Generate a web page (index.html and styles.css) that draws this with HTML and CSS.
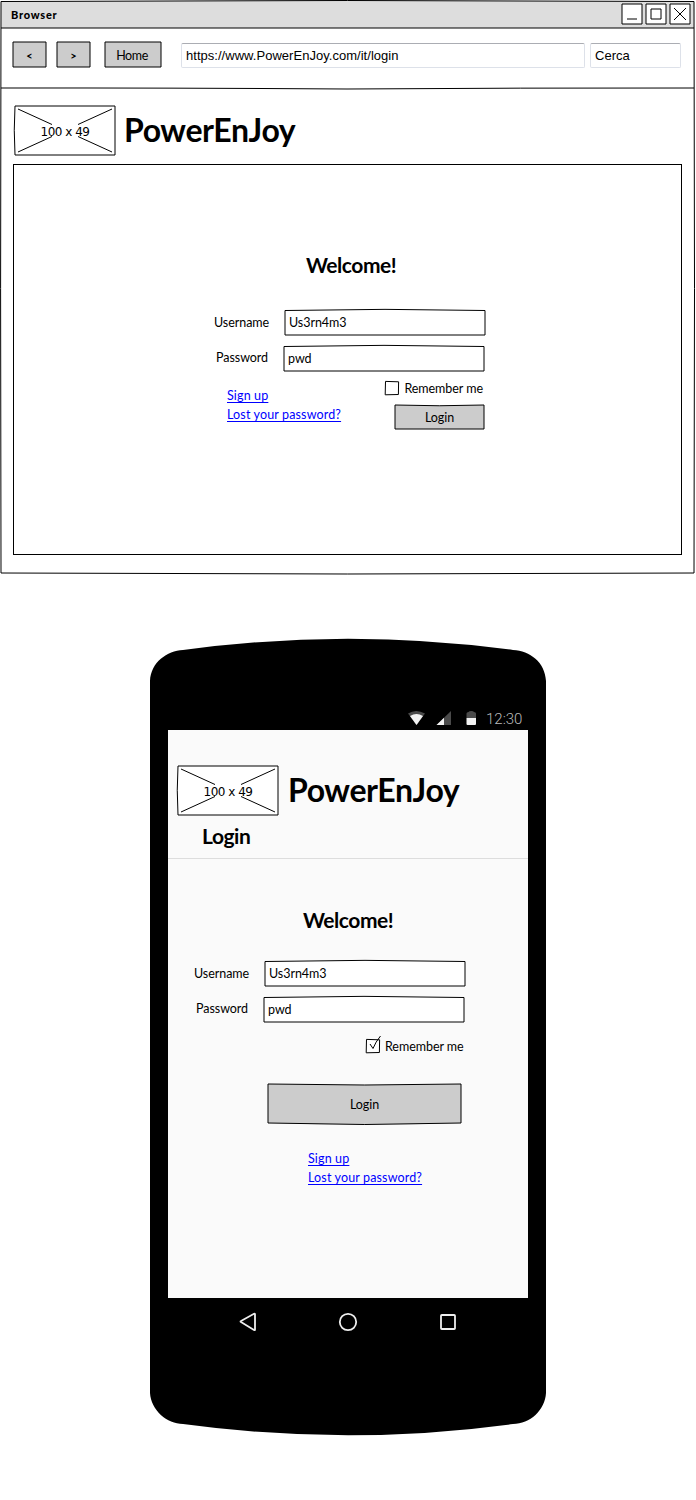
FILE: index.html
```html
<!DOCTYPE html>
<html lang="en">
<head>
<meta charset="utf-8">
<title>PowerEnJoy login</title>
<link rel="stylesheet" href="styles.css">
</head>
<body>
<section class="browser">
  <svg class="sketch" viewBox="0 0 696 576">
    <path fill="#ddd" d="M1 1H694V28H1Z"/>
    <path class="ink" d="M1 1.5Q347 -.5 694 1.5Q695 290 694 573Q347 575 1 573Q.2 290 1 1.5ZM1 28H694M1 88Q170 87.8 347 89Q520 87.8 694 88"/>
  </svg>
  <header class="titlebar">
    <span class="window-name">Browser</span>
    <div class="window-buttons">
      <svg class="window-button" viewBox="0 0 22 22"><path d="M1 1H21V21H1ZM6 16H16"/></svg>
      <svg class="window-button" viewBox="0 0 22 22"><path d="M1 1H21V21H1ZM6 6H16V16H6Z"/></svg>
      <svg class="window-button" viewBox="0 0 22 22"><path d="M1 1H21V21H1ZM5 5L17 17M17 5L5 17"/></svg>
    </div>
  </header>
  <nav class="toolbar">
    <button class="button nav-button"><svg class="sketch" viewBox="0 0 35 27"><path class="ink grey" d="M1 1H34V26H1Z"/></svg><span class="arrow">&lt;</span></button>
    <button class="button nav-button"><svg class="sketch" viewBox="0 0 35 27"><path class="ink grey" d="M1 1H34V26H1Z"/></svg><span class="arrow">&gt;</span></button>
    <button class="button home-button"><svg class="sketch" viewBox="0 0 58 27"><path class="ink grey" d="M1 1H57V26H1Z"/></svg><span>Home</span></button>
    <div class="field address">https://www.PowerEnJoy.com/it/login</div>
    <div class="field search">Cerca</div>
  </nav>
  <main class="page">
    <div class="brand">
      <div class="placeholder">
        <svg class="sketch" viewBox="0 0 102 51"><path class="ink white" d="M1 1H101V50H1Q-.5 25 1 1Z"/><path class="ink" d="M4 4L38 19.500M98 4L64 19.500M4 47L38 31.500M98 47L64 31.500"/></svg>
        <span>100 x 49</span>
      </div>
      <h1>PowerEnJoy</h1>
    </div>
    <div class="panel">
      <h2>Welcome!</h2>
      <div class="form">
        <div class="row">
          <span class="label">Username</span>
          <div class="input"><svg class="sketch" viewBox="0 0 202 27"><path class="ink white" d="M1 1.5Q101 -.8 201 1.5V26H1Z"/></svg><span>Us3rn4m3</span></div>
        </div>
        <div class="row">
          <span class="label">Password</span>
          <div class="input shifted"><svg class="sketch" viewBox="0 0 202 27"><path class="ink white" d="M1 1.5Q101 -.8 201 1.5V26H1Z"/></svg><span>pwd</span></div>
        </div>
        <div class="bottom">
          <div class="links"><a href="#">Sign up</a><a href="#">Lost your password?</a></div>
          <div class="actions">
            <div class="remember">
              <svg class="checkbox" viewBox="0 0 16 16"><path class="ink white" d="M1.5 1.4L14.6 1.8L14.4 14.5L1.2 14.8Z"/></svg>
              <span>Remember me</span>
            </div>
            <button class="button login-button"><svg class="sketch" viewBox="0 0 91 26"><path class="ink grey" d="M1 1Q45 2.5 90 1V25H1Z"/></svg><span>Login</span></button>
          </div>
        </div>
      </div>
    </div>
  </main>
</section>

<section class="phone">
  <svg class="sketch" viewBox="0 0 396 798"><path d="M0 43C1 24 17 13 33 12Q198 -10.500 363 12C380 13 395 24 396 43V755C395 772 380 786 363 786Q198 808.500 33 786C17 786 1 772 0 755Z"/></svg>
  <div class="status">
    <svg class="status-icons" viewBox="0 0 72 16">
      <path fill="#4a4a4a" d="M0 3.500Q8 -1.500 17 3.500L8.500 15Z"/>
      <path fill="#f2f2f2" d="M2 6Q8.500 1.800 15 6L8.500 15Z"/>
      <path fill="#4a4a4a" d="M28.500 15L43 1V15Z"/><path fill="#f2f2f2" d="M28.500 15L36 7.800V15Z"/>
      <path fill="#4a4a4a" d="M58.500 8V3.500Q58.500 2 60.500 2Q61 1 63.250 1Q65.500 1 66 2Q68 2 68 3.500V8Z"/>
      <path fill="#f2f2f2" d="M58.500 8H68V14Q68 15 67 15H59.500Q58.500 15 58.500 14Z"/>
    </svg>
    <span class="clock">12:30</span>
  </div>
  <div class="screen">
    <header class="app-header">
      <div class="brand">
        <div class="placeholder">
          <svg class="sketch" viewBox="0 0 102 51"><path class="ink white" d="M1 1H101V50H1Q-.5 25 1 1Z"/><path class="ink" d="M4 4L38 19.500M98 4L64 19.500M4 47L38 31.500M98 47L64 31.500"/></svg>
          <span>100 x 49</span>
        </div>
        <h1>PowerEnJoy</h1>
      </div>
      <h2 class="page-name">Login</h2>
    </header>
    <h2>Welcome!</h2>
    <div class="form">
      <div class="row">
        <span class="label">Username</span>
        <div class="input"><svg class="sketch" viewBox="0 0 202 27"><path class="ink white" d="M1 1.500Q101 -.8 201 1.500V26H1Z"/></svg><span>Us3rn4m3</span></div>
      </div>
      <div class="row">
        <span class="label">Password</span>
        <div class="input shifted"><svg class="sketch" viewBox="0 0 202 27"><path class="ink white" d="M1 1.500Q101 -.8 201 1.500V26H1Z"/></svg><span>pwd</span></div>
      </div>
      <div class="remember">
        <svg class="checkbox" viewBox="0 0 16 16"><path class="ink white" d="M1.500 1.400L14.600 1.800L14.400 14.500L1.200 14.800Z"/><path class="ink" d="M5 6L8 10.500Q10.500 4 15.500 -2"/></svg>
        <span>Remember me</span>
      </div>
      <button class="button big-login"><svg class="sketch" viewBox="0 0 195 42"><path class="ink grey" d="M1 1Q98 3 194 1V40Q98 43 1 40Z"/></svg><span>Login</span></button>
      <div class="links"><a href="#">Sign up</a><a href="#">Lost your password?</a></div>
    </div>
  </div>
  <div class="android-nav">
    <svg viewBox="0 0 20 20"><path d="M3 10Q2 9.500 3 9L16 1.800Q17 1.500 17 2.500V17.500Q17 18.500 16 18Z"/></svg>
    <svg viewBox="0 0 20 20"><circle cx="10" cy="10" r="8.200"/></svg>
    <svg viewBox="0 0 20 20"><rect x="3" y="3" width="14" height="14" rx=".8"/></svg>
  </div>
</section>
</body>
</html>
```
FILE: styles.css
```css
* { box-sizing: border-box; }
body {
  margin: 0;
  width: 696px;
  height: 1500px;
  background: #fff;
  color: #000;
  font: 12.5px/18px "Comic Sans MS", Lato, sans-serif;
  letter-spacing: -.05px;
  white-space: nowrap;
}
h1, h2 { margin: 0; font-weight: 700; }
h1 { font-size: 32px; line-height: 40px; letter-spacing: -.4px; }
h2 { font-size: 21px; line-height: 27px; letter-spacing: -.45px; }
span, a { position: relative; }
a { color: #00f; letter-spacing: .14px; text-decoration: underline; text-underline-offset: 2px; text-decoration-skip-ink: none; }
.sketch { position: absolute; left: 0; top: 0; width: 100%; height: 100%; overflow: visible; }
.ink { fill: none; stroke: #000; stroke-width: 1; }
.ink.grey { fill: #ccc; }
.ink.white { fill: #fff; }
.button {
  position: relative;
  display: flex;
  align-items: center;
  justify-content: center;
  border: 0;
  padding: 2px 0 0;
  background: none;
  color: inherit;
  font: inherit;
  letter-spacing: inherit;
}

.browser { position: relative; width: 696px; height: 576px; }
.titlebar { position: relative; display: flex; justify-content: space-between; height: 28px; padding: 3px 5px 0 11px; }
.window-name { font-size: 11px; font-weight: 900; line-height: 23px; letter-spacing: .75px; }
.window-buttons { display: flex; gap: 2px; }
.window-button { width: 22px; height: 22px; fill: #fff; stroke: #000; }
.toolbar { display: flex; height: 60px; padding: 13px 0 0 12px; }
.nav-button { width: 35px; height: 27px; margin-right: 9px; }
.arrow { font-size: 11px; font-weight: 700; }
.home-button { width: 58px; height: 27px; margin-left: 4px; padding-right: 2px; letter-spacing: -.4px; }
.field {
  position: relative;
  height: 25px;
  margin-top: 2px;
  padding-left: 4px;
  border: 1px solid #dde1e9;
  border-top-color: #abadb3;
  border-radius: 2px;
  background: #fff;
  font: 13px/24px "Liberation Sans", sans-serif;
  letter-spacing: .03px;
}
.address { width: 404px; margin-left: 19px; }
.search { width: 91px; margin-left: 5px; }
.page { position: relative; padding: 17px 0 0 13px; }
.brand { display: flex; height: 51px; }
.brand h1 { margin-left: 8px; padding-top: 5px; }
.placeholder {
  position: relative;
  width: 102px;
  height: 51px;
  margin-left: 1px;
  text-align: center;
  font: 12px/54px "DejaVu Sans", sans-serif;
  letter-spacing: -.5px;
}
.panel { width: 669px; height: 391px; margin-top: 8px; border: 1px solid #000; padding: 86px 0 0 200px; }
.panel h2 { padding-left: 92px; }
.form { width: 272px; }
.panel .form { margin-top: 31px; }
.row { display: flex; height: 27px; margin-bottom: 9px; }
.label { width: 70px; padding-top: 5px; }
.row + .row .label { padding: 4px 0 0 2px; }
.input { position: relative; width: 202px; height: 27px; padding: 5px 0 0 5px; }
.shifted { margin-left: -1px; }
.bottom { display: flex; justify-content: space-between; padding-right: 1px; }
.links { display: flex; flex-direction: column; align-items: flex-start; gap: 1px; }
.bottom .links { padding: 6px 0 0 13px; }
.remember { display: flex; gap: 4px; height: 16px; }
.actions .remember { padding-right: 2px; }
.checkbox { width: 16px; height: 16px; overflow: visible; }
.actions { display: flex; flex-direction: column; align-items: flex-end; margin-top: -1px; }
.login-button { width: 91px; height: 26px; margin-top: 8px; }

.phone { position: relative; width: 396px; height: 798px; margin: 62px 0 0 150px; }
.status { position: relative; display: flex; height: 92px; padding: 72px 0 0 258px; }
.status-icons { width: 72px; height: 16px; }
.clock { margin-left: 6px; color: #bbb; font: 300 15px/18px Roboto, sans-serif; letter-spacing: 0; }
.screen { position: relative; width: 360px; height: 568px; margin-left: 18px; background: #fafafa; }
.app-header { height: 129px; padding: 35px 0 0 8px; border-bottom: 1px solid #ddd; }
.app-header h1 { margin-left: 9px; }
.page-name { padding: 6px 0 0 26px; }
.screen > h2 { padding: 47px 0 0 135px; }
.screen .form { margin: 27px 0 0 26px; }
.screen .remember { margin: 15px 0 0 171px; }
.big-login { width: 195px; height: 42px; margin: 29px 0 0 73px; }
.screen .links { padding: 25px 0 0 114px; }
.android-nav { position: relative; display: flex; justify-content: space-between; padding: 14px 88px 0; }
.android-nav svg { width: 20px; height: 20px; fill: none; stroke: #eee; stroke-width: 1.8; }
```
